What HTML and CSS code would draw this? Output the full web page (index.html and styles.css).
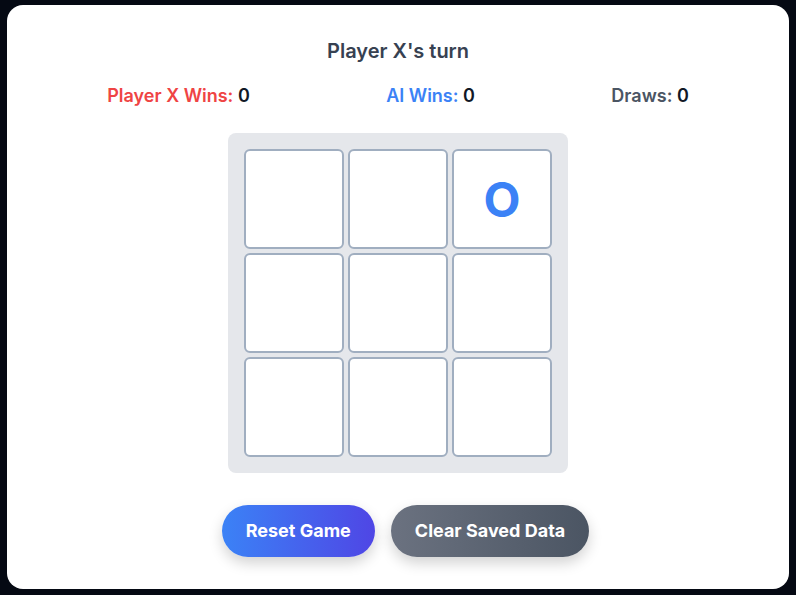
FILE: index.html
```html
<!DOCTYPE html>
<html lang="en">
<head>
    <meta charset="UTF-8">
    <meta name="viewport" content="width=device-width, initial-scale=1.0">
    <title>Tic Tac Toe</title>
    <link rel="stylesheet" href="styles.css">
</head>
<body>
    <div class="container">
        <h2 class="status">Player X's turn</h2>

        <div class="scoreboard">
            <div class="score score-x">Player X Wins: <span class="count">0</span></div>
            <div class="score score-ai">AI Wins: <span class="count">0</span></div>
            <div class="score score-draw">Draws: <span class="count">0</span></div>
        </div>

        <div class="board">
            <button class="cell"></button>
            <button class="cell"></button>
            <button class="cell o">O</button>
            <button class="cell"></button>
            <button class="cell"></button>
            <button class="cell"></button>
            <button class="cell"></button>
            <button class="cell"></button>
            <button class="cell"></button>
        </div>

        <div class="actions">
            <button class="btn btn-reset">Reset Game</button>
            <button class="btn btn-clear">Clear Saved Data</button>
        </div>
    </div>
</body>
</html>
```

FILE: styles.css
```css
body {
    font-family: Inter, "Noto Sans", sans-serif;
    margin: 0;
    padding: 5px 7px 6px;
    background-color: #050913;
}
.container {
    background: white;
    padding: 32px;
    border-radius: 16px;
}
.status {
    margin: 2px 0 22px;
    font-size: 20px;
    line-height: 24px;
    font-weight: 600;
    color: #374151;
    text-align: center;
}
.scoreboard {
    display: flex;
    justify-content: space-around;
    margin-bottom: 26px;
}
.score {
    font-size: 18px;
    line-height: 22px;
    font-weight: 600;
}
.score-x {
    color: #ef4444;
}
.score-ai {
    color: #3b82f6;
}
.score-draw {
    color: #4b5563;
}
.count {
    color: #111827;
}
.board {
    display: grid;
    grid-template-columns: repeat(3, 100px);
    grid-template-rows: repeat(3, 100px);
    gap: 4px;
    width: max-content;
    margin: 0 auto;
    padding: 16px;
    background-color: #e5e7eb;
    border-radius: 8px;
}
.cell {
    background: white;
    border: 2px solid #a0aec0;
    border-radius: 6px;
    padding: 0;
    font-family: inherit;
    font-size: 48px;
    font-weight: 700;
    cursor: pointer;
}
.cell.o {
    color: #3b82f6;
}
.actions {
    display: flex;
    justify-content: center;
    gap: 16px;
    margin-top: 32px;
    padding-left: 15px;
}
.btn {
    font-family: inherit;
    font-size: 18px;
    line-height: 22px;
    font-weight: 700;
    color: white;
    padding: 15px 24px;
    border: none;
    border-radius: 999px;
    cursor: pointer;
    box-shadow: 0 6px 14px rgba(0, 0, 0, 0.18);
}
.btn-reset {
    background: linear-gradient(to right, #3b82f6, #4f46e5);
}
.btn-clear {
    background: linear-gradient(to right, #6b7280, #4b5563);
}
```
